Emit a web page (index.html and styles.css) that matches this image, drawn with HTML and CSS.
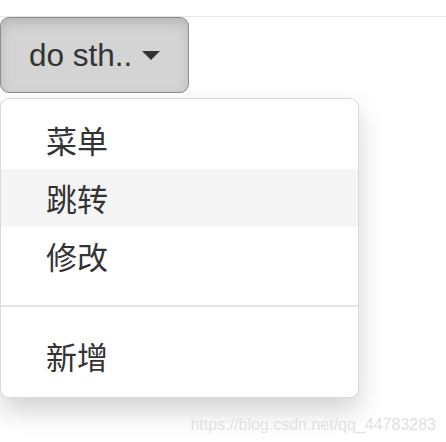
FILE: index.html
```html
<!DOCTYPE html>
<html lang="zh">
<head>
<meta charset="utf-8">
<link rel="stylesheet" href="styles.css">
</head>
<body>
<div class="topline"></div>
<div class="dropdown">
  <button class="btn">do sth.. <span class="caret"></span></button>
  <ul class="menu">
    <li class="item">菜单</li>
    <li class="item hover">跳转</li>
    <li class="item">修改</li>
    <li class="divider"></li>
    <li class="item">新增</li>
  </ul>
</div>
<div class="watermark">https://blog.csdn.net/qq_44783283</div>
</body>
</html>
```
FILE: styles.css
```css
html, body {
  margin: 0;
  padding: 0;
  background: #fff;
  width: 446px;
  height: 442px;
  overflow: hidden;
  position: relative;
  font-family: "Liberation Sans", Arial, "Noto Sans CJK SC", sans-serif;
  color: #333;
}
.topline {
  height: 16px;
  border-bottom: 1px solid #e6e6e6;
}
.dropdown {
  position: relative;
  display: inline-block;
}
.btn {
  display: flex;
  align-items: center;
  gap: 10px;
  box-sizing: border-box;
  width: 189px;
  height: 76px;
  margin: 0;
  padding: 0 0 0 28px;
  font-family: "Liberation Sans", Arial, sans-serif;
  font-size: 31.5px;
  line-height: 45px;
  color: #333;
  background: #d4d4d4;
  border: 1px solid #8c8c8c;
  border-radius: 9px;
  box-shadow: inset 0 6px 11px rgba(0,0,0,0.125);
}
.caret {
  width: 0;
  height: 0;
  border-top: 9px solid #333;
  border-left: 9px solid transparent;
  border-right: 9px solid transparent;
}
.menu {
  position: absolute;
  left: 0;
  top: 81px;
  width: 359px;
  box-sizing: border-box;
  margin: 0;
  padding: 12px 0;
  list-style: none;
  background: #fff;
  border: 1px solid rgba(0,0,0,0.15);
  border-radius: 9px;
  box-shadow: 0 13px 27px rgba(0,0,0,0.175);
}
.item {
  height: 58px;
  line-height: 58px;
  padding: 0 45px;
  font-family: "Noto Sans CJK SC", sans-serif;
  font-size: 31px;
  color: #333;
}
.item.hover {
  background: #f5f5f5;
}
.divider {
  height: 2px;
  margin: 20px 0;
  background: #e5e5e5;
}
.watermark {
  position: absolute;
  right: 10px;
  top: 416px;
  font-family: "Liberation Sans", Arial, sans-serif;
  font-size: 16px;
  color: rgba(220,220,220,0.9);
  text-shadow: 0 0 1px rgba(255,255,255,0.8);
}
```
